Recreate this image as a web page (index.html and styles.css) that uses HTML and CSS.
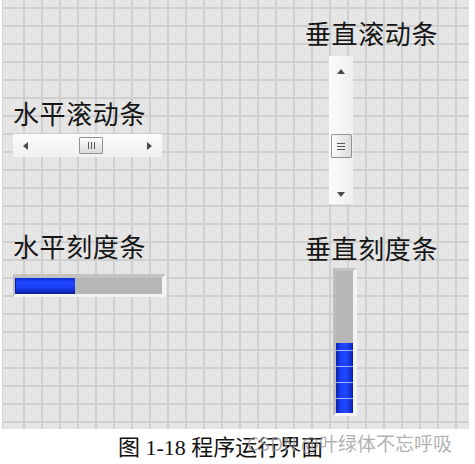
FILE: index.html
```html
<!DOCTYPE html>
<html lang="zh">
<head>
<meta charset="utf-8">
<title>程序运行界面</title>
<link rel="stylesheet" href="styles.css">
</head>
<body>
<div class="panel">
  <div class="col col-left">
    <div class="label label-hs">水平滚动条</div>
    <div class="hscroll">
      <svg class="arrow-h" width="5" height="8" viewBox="0 0 5 8"><path d="M5 0 L0 4 L5 8 Z" fill="#4a4a4a"/></svg>
      <div class="hthumb"><span></span><span></span><span></span></div>
      <svg class="arrow-h arrow-right" width="5" height="8" viewBox="0 0 5 8"><path d="M0 0 L5 4 L0 8 Z" fill="#4a4a4a"/></svg>
    </div>
    <div class="label label-hp">水平刻度条</div>
    <div class="hprog"><div class="hfill"></div></div>
  </div>
  <div class="col col-right">
    <div class="label">垂直滚动条</div>
    <div class="vscroll">
      <svg class="arrow-v" width="8" height="5" viewBox="0 0 8 5"><path d="M0 5 L4 0 L8 5 Z" fill="#4a4a4a"/></svg>
      <div class="vthumb"><span></span><span></span><span></span></div>
      <svg class="arrow-v arrow-down" width="8" height="5" viewBox="0 0 8 5"><path d="M0 0 L4 5 L8 0 Z" fill="#4a4a4a"/></svg>
    </div>
    <div class="label label-vp">垂直刻度条</div>
    <div class="vprog"><div class="vfill"></div></div>
  </div>
</div>
<div class="caption">
  <span class="cap">图 1-18 程序运行界面</span>
  <span class="wm">CSDN @叶绿体不忘呼吸</span>
</div>
</body>
</html>
```
FILE: styles.css
```css
html, body {
  margin: 0;
  padding: 0;
  background: #ffffff;
}
body {
  width: 475px;
  height: 464px;
  overflow: hidden;
  font-family: "Noto Sans CJK SC", "Noto Sans", sans-serif;
}
.panel {
  margin-left: 2px;
  width: 467px;
  height: 429px;
  display: grid;
  grid-template-columns: 303px 1fr;
  background-color: #e5e5e5;
  background-image:
    linear-gradient(to bottom, #cfcfcf 0 2px, transparent 2px),
    linear-gradient(to right, #d2d2d2 0 1px, #e5e5e5 1px 20px, transparent 20px),
    linear-gradient(to right, #cfcfcf 0 2px, transparent 2px);
  background-size: 18px 18px, 20px 100%, 18px 18px;
  background-repeat: repeat, no-repeat, repeat;
  background-position: 0 7px, 0 0, 3px 0;
}
.col {
  display: flex;
  flex-direction: column;
  align-items: flex-start;
}
.col-left {
  padding-left: 11px;
  padding-top: 100px;
}
.col-right {
  padding-top: 20px;
}
.label {
  font-size: 26px;
  line-height: 26px;
  height: 26px;
  color: #161616;
  white-space: nowrap;
  letter-spacing: 0.6px;
}
.label-hp { margin-top: 76px; }
.label-vp { margin-top: 31px; }

/* horizontal scrollbar */
.hscroll {
  margin-top: 8px;
  width: 149px;
  height: 23px;
  box-sizing: border-box;
  padding-left: 10px;
  display: flex;
  align-items: center;
  background: linear-gradient(to bottom, #fbfbfb, #f0f0f0);
}
.arrow-h { display: block; flex: none; }
.arrow-right { margin-left: 44px; }
.hthumb {
  margin-left: 51px;
  width: 24px;
  height: 17px;
  box-sizing: border-box;
  border: 1px solid #939393;
  border-radius: 1px;
  background: linear-gradient(to bottom, #fdfdfd, #dadada);
  display: flex;
  justify-content: center;
  align-items: center;
  gap: 2px;
}
.hthumb span {
  width: 1px;
  height: 7px;
  background: #555;
}

/* vertical scrollbar */
.vscroll {
  margin-top: 10px;
  margin-left: 24px;
  width: 24px;
  height: 148px;
  box-sizing: border-box;
  padding-top: 13px;
  display: flex;
  flex-direction: column;
  align-items: center;
  background: linear-gradient(to right, #fbfbfb, #f0f0f0);
}
.arrow-v { display: block; flex: none; }
.vthumb {
  margin-top: 60px;
  width: 21px;
  height: 24px;
  box-sizing: border-box;
  border: 1px solid #939393;
  border-radius: 1px;
  background: linear-gradient(to right, #fdfdfd, #dadada);
  display: flex;
  flex-direction: column;
  justify-content: center;
  align-items: center;
  gap: 2px;
}
.vthumb span {
  width: 8px;
  height: 1px;
  background: #555;
}
.arrow-down { margin-top: 34px; }

/* horizontal progress */
.hprog {
  margin-top: 15px;
  width: 147px;
  height: 16px;
  border-top: 4px solid #c3c3c3;
  border-left: 2px solid #bdbdbd;
  border-right: 4px solid #f4f4f4;
  border-bottom: 3px solid #f4f4f4;
  background: #b6b6b6;
  display: flex;
}
.hfill {
  width: 60px;
  height: 100%;
  background: linear-gradient(to bottom, #0c2bd6 0%, #1f48ff 30%, #1a3df4 62%, #0b1c96 100%);
  box-shadow: inset 1px 0 0 #0a1f9a;
}

/* vertical progress */
.vprog {
  margin-top: 7px;
  margin-left: 28px;
  width: 17px;
  height: 142px;
  border-top: 3px solid #c3c3c3;
  border-left: 3px solid #bdbdbd;
  border-right: 4px solid #f4f4f4;
  border-bottom: 3px solid #f4f4f4;
  background: #b6b6b6;
  display: flex;
  flex-direction: column;
  justify-content: flex-end;
}
.vfill {
  height: 70px;
  background:
    repeating-linear-gradient(to top, transparent 0 14px, #9fb2ff 14px 15.5px, transparent 15.5px 16px),
    linear-gradient(to right, #0b1f9e 0%, #1a3ff6 25%, #1f48ff 55%, #1432dc 85%, #0b1c96 100%);
}

/* caption */
.caption {
  position: relative;
  height: 35px;
  box-sizing: border-box;
  padding-top: 3px;
  padding-left: 118px;
}
.cap {
  font-family: "Liberation Serif", "Noto Sans CJK SC", serif;
  font-size: 22px;
  line-height: 32px;
  color: #111;
  white-space: nowrap;
}
.wm {
  position: absolute;
  left: 247px;
  top: 1px;
  font-family: "Noto Sans CJK SC", "Noto Sans", sans-serif;
  font-size: 19px;
  line-height: 26px;
  color: rgba(150, 150, 150, 0.75);
  white-space: nowrap;
}
```
